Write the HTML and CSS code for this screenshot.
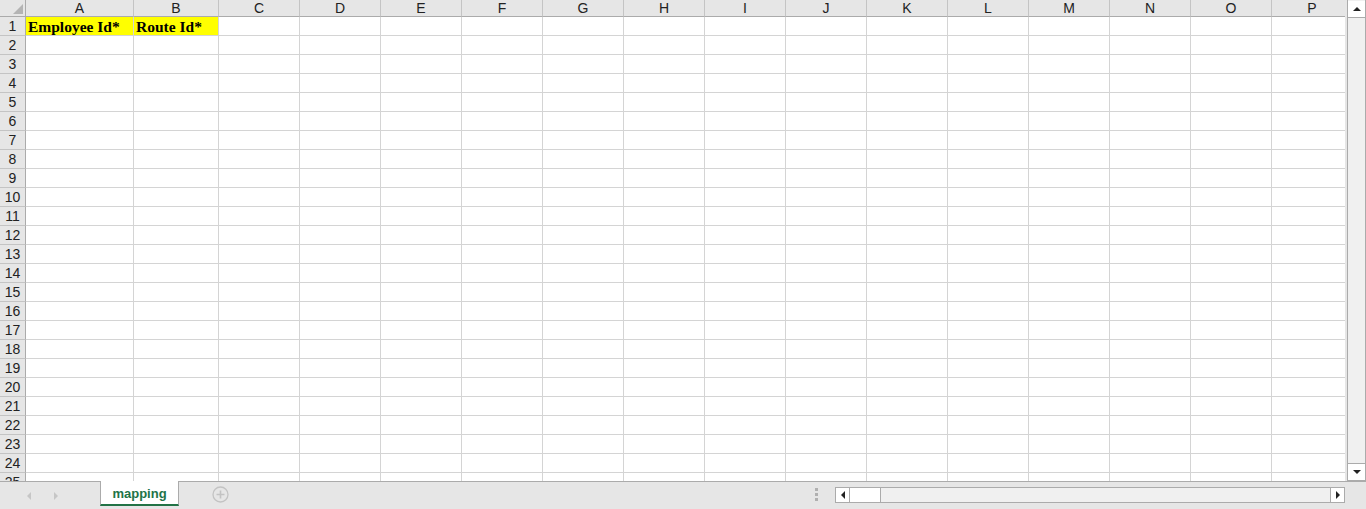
FILE: index.html
```html
<!DOCTYPE html>
<html>
<head>
    <title>mapping</title>
    <link rel="stylesheet" href="styles.css">
</head>
<body>
    <div class="workbook">
        <div class="sheet-area">
            <div class="sheet" id="sheet">
                <div class="corner"><span class="corner-mark"></span></div>
                <div class="col-head">A</div>
                <div class="col-head">B</div>
                <div class="col-head">C</div>
                <div class="col-head">D</div>
                <div class="col-head">E</div>
                <div class="col-head">F</div>
                <div class="col-head">G</div>
                <div class="col-head">H</div>
                <div class="col-head">I</div>
                <div class="col-head">J</div>
                <div class="col-head">K</div>
                <div class="col-head">L</div>
                <div class="col-head">M</div>
                <div class="col-head">N</div>
                <div class="col-head">O</div>
                <div class="col-head">P</div>

                <div class="row-head">1</div>
                <div class="cell title">Employee Id*</div>
                <div class="cell title">Route Id*</div>
                <!-- rest of row 1 and rows 2..25 are added by sheet.js -->
            </div>
            <div class="vscroll">
                <div class="sbtn"><span class="arrow-up"></span></div>
                <div class="vtrack"></div>
                <div class="sbtn"><span class="arrow-down"></span></div>
            </div>
        </div>
        <div class="tabbar">
            <div class="tab-nav">
                <span class="nav-left"></span>
                <span class="nav-right"></span>
            </div>
            <div class="tab active">mapping</div>
            <div class="add-sheet">
                <svg width="17" height="17" viewBox="0 0 17 17">
                    <circle cx="8.5" cy="8.5" r="7.5" fill="none" stroke="#c3c3c3" stroke-width="1.3"/>
                    <path d="M8.5 4.5v8M4.5 8.5h8" stroke="#c3c3c3" stroke-width="1.6"/>
                </svg>
            </div>
            <div class="spacer"></div>
            <div class="split-dots"><i></i><i></i><i></i></div>
            <div class="hscroll">
                <div class="sbtn small"><span class="arrow-left"></span></div>
                <div class="thumb"></div>
                <div class="htrack"></div>
                <div class="sbtn small"><span class="arrow-right"></span></div>
            </div>
        </div>
    </div>
    <script src="sheet.js"></script>
</body>
</html>
```

FILE: styles.css
```css
body {
    margin: 0;
    font-family: "Liberation Sans", Arial, sans-serif;
    background: #e6e6e6;
    overflow: hidden;
}
.workbook {
    width: 1366px;
    height: 509px;
    display: flex;
    flex-direction: column;
}
.sheet-area {
    height: 481px;
    display: flex;
}
.sheet {
    width: 1345px;
    flex: none;
    display: grid;
    grid-template-columns: 26px 108px 85px repeat(14, 81px);
    grid-template-rows: 17px;
    grid-auto-rows: 19px;
    overflow: hidden;
    background: #fff;
    align-content: start;
}
.sheet > div {
    box-sizing: border-box;
    border-right: 1px solid #d4d4d4;
    border-bottom: 1px solid #d4d4d4;
}
.corner {
    background: #e6e6e6;
    position: relative;
}
.sheet > .corner,
.sheet > .col-head {
    border-bottom-color: #ababab;
}
.sheet > .corner,
.sheet > .row-head {
    border-right-color: #ababab;
}
.sheet > .col-head {
    border-right-color: #c4c4c4;
}
.sheet > .row-head {
    border-bottom-color: #c4c4c4;
}
.corner-mark {
    position: absolute;
    right: 2px;
    bottom: 2px;
    width: 0;
    height: 0;
    border-left: 10px solid transparent;
    border-bottom: 10px solid #b4b4b4;
}
.col-head, .row-head {
    background: #e6e6e6;
    color: #222;
    font-size: 14px;
    text-align: center;
}
.col-head {
    line-height: 16px;
}
.row-head {
    line-height: 19px;
}
.cell.title {
    background: #ffff00;
    font-family: "Liberation Serif", "Times New Roman", serif;
    font-weight: bold;
    font-size: 15.5px;
    line-height: 20px;
    padding-left: 2px;
    white-space: nowrap;
}
.vscroll {
    width: 17px;
    margin-left: 2px;
    display: flex;
    flex-direction: column;
    border-left: 1px solid #ababab;
    border-right: 1px solid #ababab;
    background: #f0f0f0;
}
.vtrack { flex: 1; }
.sbtn {
    height: 16px;
    background: #fff;
    border: 1px solid #ababab;
    margin: 0 -1px;
    display: flex;
    align-items: center;
    justify-content: center;
}
.vscroll .sbtn:first-child { border-top: none; height: 16px; margin-top: 1px; }
.vscroll .sbtn:last-child { height: 16px; }
.arrow-up {
    border-left: 4px solid transparent;
    border-right: 4px solid transparent;
    border-bottom: 4px solid #222;
}
.arrow-down {
    border-left: 4px solid transparent;
    border-right: 4px solid transparent;
    border-top: 4px solid #222;
}
.tabbar {
    height: 28px;
    box-sizing: border-box;
    border-top: 1px solid #ababab;
    display: flex;
    align-items: flex-start;
}
.tab-nav {
    width: 100px;
    height: 27px;
    display: flex;
    align-items: center;
    gap: 23px;
    padding-left: 27px;
    box-sizing: border-box;
}
.nav-left {
    border-top: 4px solid transparent;
    border-bottom: 4px solid transparent;
    border-right: 4px solid #c6c6c6;
}
.nav-right {
    border-top: 4px solid transparent;
    border-bottom: 4px solid transparent;
    border-left: 4px solid #c6c6c6;
}
.tab {
    margin-top: -1px;
    width: 79px;
    height: 25px;
    box-sizing: border-box;
    background: #fff;
    border-left: 1px solid #ababab;
    border-right: 1px solid #ababab;
    border-bottom: 2px solid #217346;
    color: #217346;
    font-weight: bold;
    font-size: 13px;
    text-align: center;
    line-height: 25px;
}
.add-sheet {
    margin-left: 33px;
    margin-top: 4px;
    height: 17px;
}
.spacer { flex: 1; }
.split-dots {
    width: 3px;
    margin-top: 6px;
    margin-right: 17px;
    display: flex;
    flex-direction: column;
    gap: 2px;
}
.split-dots i {
    display: block;
    width: 3px;
    height: 3px;
    background: #b0b0b0;
}
.hscroll {
    width: 510px;
    height: 16px;
    margin-top: 5px;
    margin-right: 21px;
    display: flex;
    background: #f0f0f0;
    border-top: 1px solid #ababab;
    border-bottom: 1px solid #ababab;
    box-sizing: border-box;
}
.sbtn.small {
    width: 15px;
    height: 16px;
    margin: -1px 0;
    box-sizing: border-box;
}
.thumb {
    width: 31px;
    height: 16px;
    margin: -1px 0;
    box-sizing: border-box;
    background: #fff;
    border: 1px solid #ababab;
    border-left: none;
}
.htrack { flex: 1; }
.arrow-left {
    border-top: 4px solid transparent;
    border-bottom: 4px solid transparent;
    border-right: 4px solid #222;
}
.arrow-right {
    border-top: 4px solid transparent;
    border-bottom: 4px solid transparent;
    border-left: 4px solid #222;
}
```

FILE: sheet.js
```js
// fill the rest of the grid with empty cells
var sheet = document.getElementById('sheet');
var cols = 16;

function addCells(n) {
    for (var i = 0; i < n; i++) {
        var td = document.createElement('div');
        td.className = 'cell';
        sheet.appendChild(td);
    }
}

addCells(cols - 2); // row 1 already has A and B

for (var r = 2; r <= 25; r++) {
    var th = document.createElement('div');
    th.className = 'row-head';
    th.textContent = r;
    sheet.appendChild(th);
    addCells(cols);
}
```
